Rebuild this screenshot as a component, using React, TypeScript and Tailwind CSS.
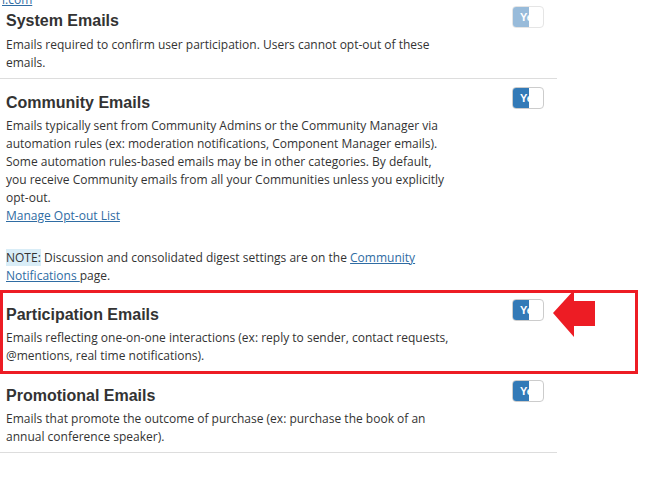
import React from 'react';

type SectionProps = {
  title: string;
  disabled?: boolean;
  highlight?: boolean;
  leftPt?: string;
  headMb?: string;
  togglePt?: string;
  pb?: string;
  children: React.ReactNode;
};

const Toggle = ({ disabled }: { disabled?: boolean }) => (
  <div
    className={`flex w-[32px] h-[22px] overflow-hidden rounded-[4px] border border-[#ccc] bg-white ${
      disabled ? 'opacity-50' : ''
    }`}
  >
    <div className="w-[16px] h-full overflow-hidden whitespace-nowrap bg-[#337ab7] pl-[7px] font-['Liberation_Sans',Arial,sans-serif] text-[11px] font-bold leading-[20px] text-white">
      Yes
    </div>
  </div>
);

const Section = ({
  title,
  disabled,
  highlight,
  leftPt = 'pt-[13px]',
  headMb = 'mb-[3px]',
  togglePt = 'pt-[8px]',
  pb = 'pb-[6px]',
  children,
}: SectionProps) => (
  <div className={`relative flex justify-between border-b border-[#ddd] ${pb}`}>
    <div className={`w-[455px] pl-[6px] ${leftPt}`}>
      <h3
        className={`${headMb} font-['Liberation_Sans',Arial,sans-serif] text-[16px] font-bold leading-[22px] text-[#333]`}
      >
        {title}
      </h3>
      <div className="text-[12px] leading-[18px] text-[#333]">{children}</div>
    </div>
    <div className={`mr-[13px] ${togglePt}`}>
      <Toggle disabled={disabled} />
    </div>
    {highlight && (
      <div className="pointer-events-none absolute -top-px -bottom-[3px] left-0 w-[638px] border-[3px] border-[#ed1c24]" />
    )}
  </div>
);

export default function App() {
  return (
    <div className="relative min-h-screen overflow-hidden bg-white font-['Open_Sans','Liberation_Sans',sans-serif]">
      <div className="-mt-[9px] w-[557px]">
        <div className="pl-[2px] text-[12px] leading-[18px]">
          <a className="text-[#2f6ca3] underline">l.com</a>
        </div>

        <Section
          title="System Emails"
          disabled
          leftPt="pt-[1px]"
          headMb="mb-[4px]"
          togglePt="-mt-[3px]"
        >
          Emails required to confirm user participation. Users cannot opt-out of these emails.
        </Section>

        <Section title="Community Emails" pb="pb-[5px]">
          <p>
            Emails typically sent from Community Admins or the Community Manager via automation
            rules (ex: moderation notifications, Component Manager emails). Some automation
            rules-based emails may be in other categories. By default, you receive Community emails
            from all your Communities unless you explicitly opt-out.
          </p>
          <a className="text-[#2f6ca3] underline">Manage Opt-out List</a>
          <p className="mt-[24px]">
            <span className="bg-[#d9edf7]">NOTE:</span> Discussion and consolidated digest settings
            are on the <a className="text-[#2f6ca3] underline">Community Notifications </a>page.
          </p>
        </Section>

        <Section title="Participation Emails" highlight>
          Emails reflecting one-on-one interactions (ex: reply to sender, contact requests,
          @mentions, real time notifications).
        </Section>

        <Section title="Promotional Emails">
          Emails that promote the outcome of purchase (ex: purchase the book of an annual conference
          speaker).
        </Section>
      </div>

      {/* annotation arrow */}
      <svg
        className="pointer-events-none absolute left-[553px] top-[290px]"
        width="42"
        height="47"
        viewBox="0 0 42 47"
      >
        <polygon points="0,23 21,0 21,11 42,11 42,36 21,36 21,47" fill="#ed1c24" />
      </svg>
    </div>
  );
}
